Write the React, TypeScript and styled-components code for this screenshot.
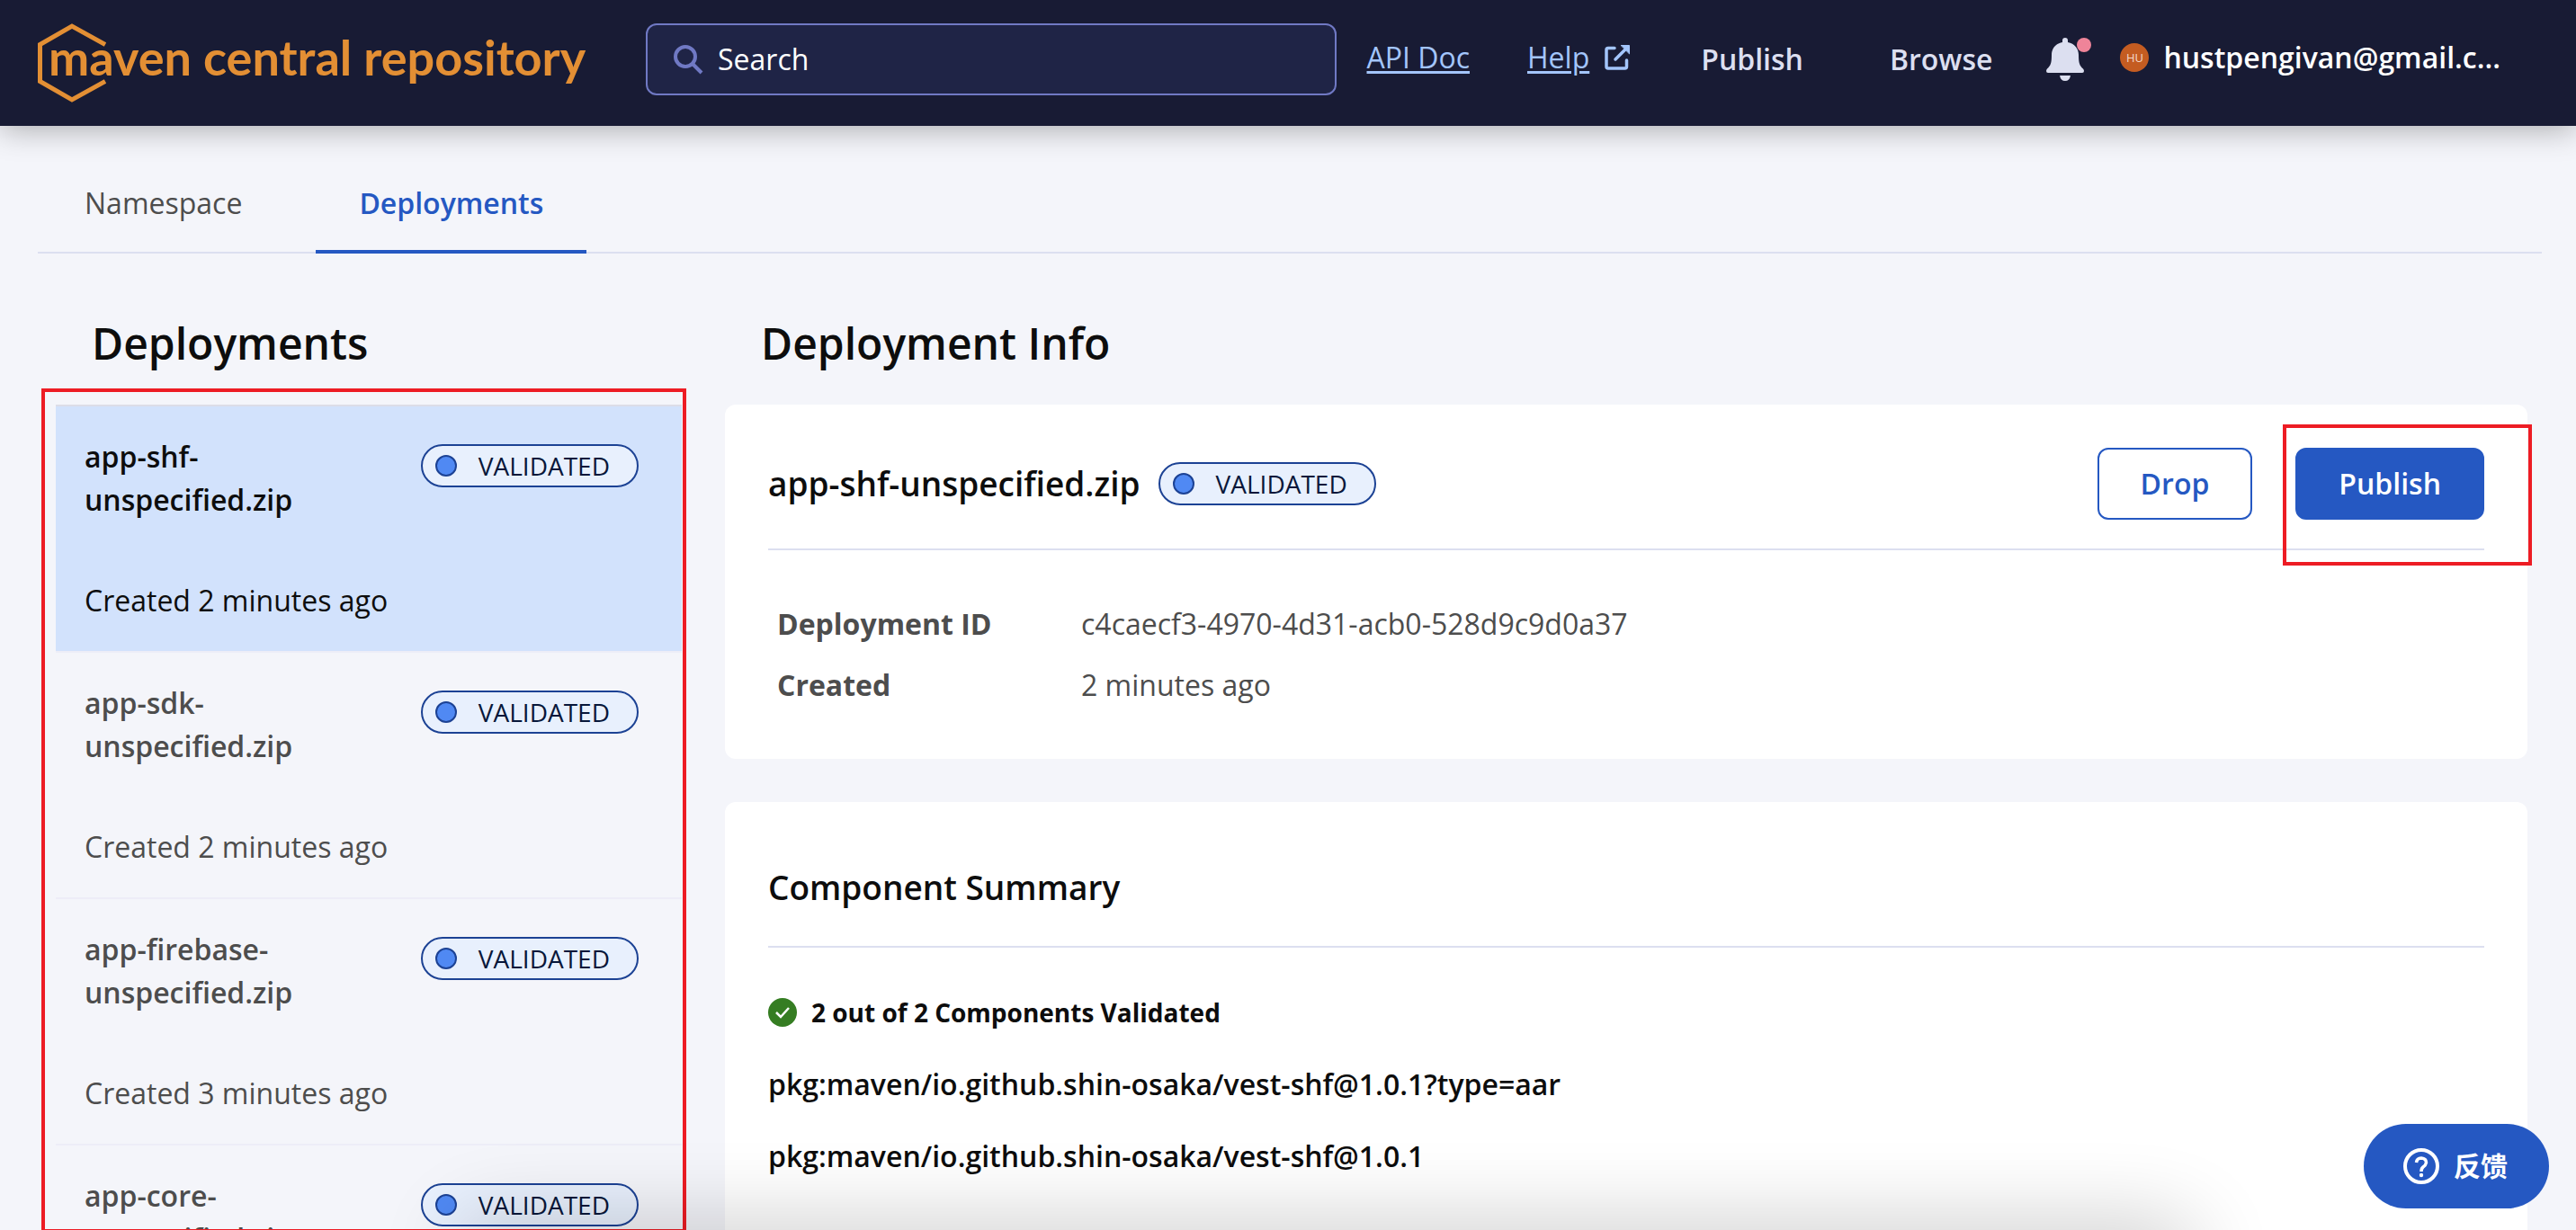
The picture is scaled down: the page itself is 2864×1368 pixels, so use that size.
import React from "react";
import styled, { createGlobalStyle, css } from "styled-components";

const Global = createGlobalStyle`
  *, *::before, *::after { box-sizing: border-box; }
  html, body { margin: 0; background: #f4f5fa; }
  body {
    color: #0d0d0d;
    font-family: "Open Sans", "Noto Sans CJK SC", sans-serif;
    font-size: 32px;
    line-height: 48px;
  }
  button, input { font: inherit; }
  h1, h2, h3, p, ul, dl, dd { margin: 0; padding: 0; }
`;

const Page = styled.div`
  position: relative;
  height: 100vh;
  min-height: 600px;
  overflow: hidden;
  display: flex;
  flex-direction: column;
`;

const Header = styled.header`
  flex: none;
  height: 140px;
  padding: 0 84px 0 42px;
  display: flex;
  align-items: center;
  background: #181b34;
  box-shadow: 0 4px 32px rgba(0, 0, 0, 0.3);
`;

const Logo = styled.a`
  flex: none;
  display: flex;
  align-items: center;
  width: 616px;
  color: #e38f34;
  font-family: Lato, sans-serif;
  font-size: 54px;
  font-weight: 700;
  line-height: 64px;
  text-decoration: none;
  white-space: nowrap;
`;

const LogoMark = styled.svg`
  flex: none;
  width: 76px;
  height: 88px;
  margin-right: -64px;
`;

const LogoText = styled.span`
  padding-bottom: 12px;
`;

const SearchBox = styled.label`
  flex: 1;
  max-width: 768px;
  height: 80px;
  margin: 0 32px 8px 60px;
  padding: 0 28px;
  display: flex;
  align-items: center;
  gap: 16px;
  border: 2px solid #7079c4;
  border-radius: 12px;
  background: #1f2446;
`;

const SearchInput = styled.input`
  flex: 1;
  min-width: 0;
  padding: 0;
  border: 0;
  outline: 0;
  background: transparent;
  color: #fff;
  &::placeholder { color: #fff; opacity: 1; }
`;

const DocLinks = styled.div`
  flex: none;
  display: flex;
  align-items: center;
  gap: 64px;
  margin: 0 78px 12px auto;
`;

const DocLink = styled.a`
  display: flex;
  align-items: center;
  gap: 16px;
  color: #a3c5fb;
  text-decoration: none;
  span { text-decoration: underline; text-decoration-thickness: 3px; text-underline-offset: 3px; }
`;

const Nav = styled.nav`
  flex: none;
  display: flex;
  align-items: center;
  gap: 96px;
  margin-bottom: 8px;
`;

const NavLink = styled.a`
  color: #dcdff0;
  font-weight: 600;
  text-decoration: none;
`;

const Account = styled.div`
  flex: none;
  display: flex;
  align-items: center;
  gap: 40px;
  margin: 0 0 12px 60px;
`;

const BellButton = styled.button`
  position: relative;
  display: flex;
  margin-top: 4px;
  padding: 0;
  border: 0;
  background: none;
`;

const BellDot = styled.span`
  position: absolute;
  top: 0;
  right: -8px;
  width: 16px;
  height: 16px;
  border-radius: 50%;
  background: #ef8499;
`;

const UserButton = styled.button`
  display: flex;
  align-items: center;
  gap: 16px;
  padding: 0;
  border: 0;
  background: none;
  color: #fff;
  font-weight: 600;
`;

const Avatar = styled.span`
  width: 32px;
  height: 32px;
  border-radius: 50%;
  background: #c45c21;
  color: #f3d9cb;
  font-size: 13px;
  font-weight: 400;
  line-height: 32px;
  text-align: center;
`;

const TabBar = styled.div`
  flex: none;
  display: flex;
  height: 142px;
  margin: 0 38px 0 42px;
  padding: 50px 0 0 4px;
  border-bottom: 2px solid #dcdff0;
`;

const Tab = styled.button<{ $active?: boolean }>`
  height: 92px;
  padding: 0 48px 16px;
  margin-right: 34px;
  border: 0;
  border-bottom: 4px solid transparent;
  background: none;
  color: #4d4d4d;
  ${(p) => p.$active && css`
    border-bottom-color: #2558c2;
    color: #2558c2;
    font-weight: 600;
  `}
`;

const Main = styled.main`
  flex: 1;
  min-height: 0;
  display: flex;
  gap: 43px;
  padding: 64px 54px 0 46px;
`;

const Sidebar = styled.section`
  flex: none;
  width: 717px;
  display: flex;
  flex-direction: column;
`;

const SectionTitle = styled.h1<{ $indent: number }>`
  flex: none;
  height: 104px;
  padding-left: ${(p) => p.$indent}px;
  font-size: 48px;
  font-weight: 600;
  line-height: 72px;
`;

const ListFrame = styled.div`
  flex: 1;
  min-height: 0;
  margin: -18px 0 -3px;
  padding: 14px 1px 0 12px;
  overflow: hidden;
  border: 4px solid #ed1c24;
`;

const List = styled.ul`
  list-style: none;
  border-top: 2px solid #dcdde8;
`;

const Item = styled.li<{ $active?: boolean }>`
  border-bottom: 2px solid #ededf7;
  padding: 32px 48px 32px 32px;
  color: #4d4d4d;
  ${(p) => p.$active && css`
    background: #d2e2fc;
    background-clip: padding-box;
    color: #0d0d0d;
  `}
`;

const ItemHead = styled.div`
  display: flex;
  justify-content: space-between;
  align-items: flex-start;
  margin-bottom: 64px;
`;

const ItemName = styled.h3`
  width: 272px;
  font-size: 32px;
  font-weight: 600;
  line-height: 48px;
`;

const Badge = styled.span`
  display: flex;
  align-items: center;
  gap: 24px;
  height: 48px;
  padding: 0 30px 0 14px;
  border: 2px solid #1c4294;
  border-radius: 24px;
  background: #e8f0fd;
  color: #08173a;
  font-size: 28px;
  &::before {
    content: "";
    width: 24px;
    height: 24px;
    border: 2px solid #1c4294;
    border-radius: 50%;
    background: #5089f3;
  }
`;

const BadgeSlot = styled.div`
  padding-top: 10px;
`;

const Detail = styled.section`
  flex: 1;
  min-width: 0;
`;

const Card = styled.article`
  margin-bottom: 48px;
  padding: 48px 48px 44px;
  border-radius: 12px;
  background: #fff;
`;

const CardHead = styled.div<{ $plain?: boolean }>`
  display: flex;
  align-items: center;
  gap: 20px;
  min-height: 114px;
  padding-bottom: ${(p) => (p.$plain ? 18 : 32)}px;
  border-bottom: 2px solid #dcdff0;
`;

const CardTitle = styled.h2`
  font-size: 37px;
  font-weight: 600;
  line-height: 56px;
`;

const Actions = styled.div`
  display: flex;
  gap: 48px;
  margin-left: auto;
`;

const Button = styled.button<{ $primary?: boolean }>`
  height: 80px;
  padding: 0 46px;
  border: 2px solid #2558c2;
  border-radius: 12px;
  background: ${(p) => (p.$primary ? "#2558c2" : "#fff")};
  color: ${(p) => (p.$primary ? "#fff" : "#2558c2")};
  font-weight: 600;
`;

const Highlighted = styled.div`
  position: relative;
  &::after {
    content: "";
    position: absolute;
    inset: -26px -53px -51px -14px;
    border: 4px solid #ed1c24;
    pointer-events: none;
  }
`;

const Facts = styled.dl`
  display: grid;
  grid-template-columns: 338px 1fr;
  row-gap: 20px;
  padding: 58px 0 14px 10px;
  color: #4d4d4d;
  dt { font-weight: 700; }
`;

const Summary = styled.p`
  display: flex;
  align-items: center;
  gap: 16px;
  margin: 48px 0 32px;
  font-size: 28px;
  font-weight: 700;
`;

const Package = styled.p`
  margin-bottom: 32px;
  font-weight: 600;
`;

const DockShadow = styled.div`
  position: absolute;
  left: 18%;
  right: 15%;
  bottom: -60px;
  height: 60px;
  border-radius: 40px;
  box-shadow: 0 0 90px 10px rgba(0, 0, 0, 0.2);
  pointer-events: none;
`;

const Feedback = styled.button`
  position: absolute;
  right: 30px;
  bottom: 24px;
  height: 94px;
  padding: 0 46px 0 44px;
  display: flex;
  align-items: center;
  gap: 16px;
  border: 0;
  border-radius: 47px;
  background: #2558c2;
  color: #fff;
  font-size: 30px;
  font-weight: 700;
`;

const deployments = [
  { name: "app-shf-unspecified.zip", created: "Created 2 minutes ago" },
  { name: "app-sdk-unspecified.zip", created: "Created 2 minutes ago" },
  { name: "app-firebase-unspecified.zip", created: "Created 3 minutes ago" },
  { name: "app-core-unspecified.zip", created: "Created 3 minutes ago" },
];

export default function App() {
  return (
    <Page>
      <Global />
      <Header>
        <Logo href="#">
          <LogoMark viewBox="0 0 76 88" fill="none" stroke="#e38f34" strokeWidth="5" aria-hidden="true">
            <path d="M75 23.500L38 3L2.500 23.500V64.500L38 85L75 64.500" />
          </LogoMark>
          <LogoText>maven central repository</LogoText>
        </Logo>
        <SearchBox>
          <svg width="34" height="34" viewBox="0 0 34 34" fill="none" stroke="#7079c4" strokeWidth="4" aria-hidden="true">
            <circle cx="14" cy="14" r="11" />
            <path d="M22 22L32 32" />
          </svg>
          <SearchInput type="search" placeholder="Search" aria-label="Search" />
        </SearchBox>
        <DocLinks>
          <DocLink href="#"><span>API Doc</span></DocLink>
          <DocLink href="#">
            <span>Help</span>
            <svg width="30" height="30" viewBox="0 0 30 30" fill="none" stroke="#a3c5fb" strokeWidth="3.500" strokeLinecap="round" aria-hidden="true">
              <path d="M12 4.500H5Q3 4.500 3 6.500V25Q3 27 5 27H23.500Q25.500 27 25.500 25V18M13 17L24 6" />
              <path d="M19.500 1.500H28.500V10.500Z" fill="#a3c5fb" strokeWidth="1" strokeLinejoin="round" />
            </svg>
          </DocLink>
        </DocLinks>
        <Nav>
          <NavLink href="#">Publish</NavLink>
          <NavLink href="#">Browse</NavLink>
        </Nav>
        <Account>
          <BellButton aria-label="Notifications">
            <svg width="42" height="48" viewBox="0 0 42 48" fill="#dcdff0" aria-hidden="true">
              <path d="M18 5V3Q18 0 21 0T24 3V5C31.500 6.500 36 12 36 19C36 28 37 31 41 34.500Q42 35.500 42 37Q42 39 40 39H2Q0 39 0 37Q0 35.500 1 34.500C5 31 6 28 6 19C6 12 10.500 6.500 18 5Z" />
              <path d="M15 42H27Q26 48 21 48T15 42Z" />
            </svg>
            <BellDot />
          </BellButton>
          <UserButton>
            <Avatar>HU</Avatar>
            <span>hustpengivan@gmail.c...</span>
          </UserButton>
        </Account>
      </Header>
      <TabBar role="tablist">
        <Tab role="tab" aria-selected={false}>Namespace</Tab>
        <Tab role="tab" aria-selected $active>Deployments</Tab>
      </TabBar>
      <Main>
        <Sidebar>
          <SectionTitle $indent={56}>Deployments</SectionTitle>
          <ListFrame>
            <List>
              {deployments.map((d, i) => (
                <Item key={d.name} $active={i === 0}>
                  <ItemHead>
                    <ItemName>{d.name}</ItemName>
                    <BadgeSlot><Badge>VALIDATED</Badge></BadgeSlot>
                  </ItemHead>
                  <p>{d.created}</p>
                </Item>
              ))}
            </List>
          </ListFrame>
        </Sidebar>
        <Detail>
          <SectionTitle as="h2" $indent={40}>Deployment Info</SectionTitle>
          <Card>
            <CardHead>
              <CardTitle>app-shf-unspecified.zip</CardTitle>
              <Badge>VALIDATED</Badge>
              <Actions>
                <Button>Drop</Button>
                <Highlighted><Button $primary>Publish</Button></Highlighted>
              </Actions>
            </CardHead>
            <Facts>
              <dt>Deployment ID</dt>
              <dd>c4caecf3-4970-4d31-acb0-528d9c9d0a37</dd>
              <dt>Created</dt>
              <dd>2 minutes ago</dd>
            </Facts>
          </Card>
          <Card>
            <CardHead $plain>
              <CardTitle>Component Summary</CardTitle>
            </CardHead>
            <Summary>
              <svg width="32" height="32" viewBox="0 0 32 32" fill="none" aria-hidden="true">
                <circle cx="16" cy="16" r="16" fill="#357d22" />
                <path d="M9 16L14 21L23 11" stroke="#fff" strokeWidth="2.500" />
              </svg>
              2 out of 2 Components Validated
            </Summary>
            <Package>pkg:maven/io.github.shin-osaka/vest-shf@1.0.1?type=aar</Package>
            <Package>pkg:maven/io.github.shin-osaka/vest-shf@1.0.1</Package>
          </Card>
        </Detail>
      </Main>
      <DockShadow />
      <Feedback>
        <svg width="40" height="40" viewBox="0 0 40 40" fill="none" stroke="#fff" aria-hidden="true">
          <circle cx="20" cy="20" r="18" strokeWidth="4" />
          <path d="M14.500 16Q15 11 20 11Q25.500 11.500 25.500 16Q25 19 22 21Q20 22.500 20 26" strokeWidth="3.500" />
          <circle cx="20" cy="30" r="2.200" fill="#fff" stroke="none" />
        </svg>
        反馈
      </Feedback>
    </Page>
  );
}
